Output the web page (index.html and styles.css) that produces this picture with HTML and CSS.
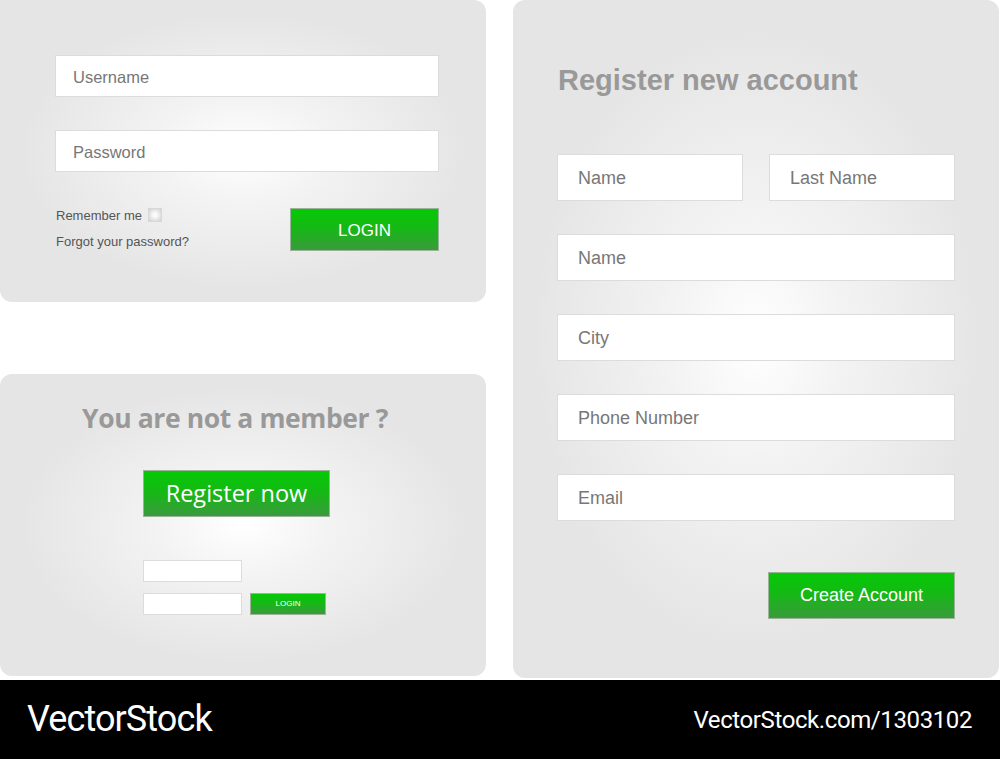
FILE: index.html
```html
<!DOCTYPE html>
<html lang="en">
  <head>
    <meta charset="utf-8" />
    <title>Login and Register</title>
    <link rel="stylesheet" href="styles.css">
  </head>
  <body>
    <div class="main">
      <div class="coluna">
        <div class="painel login">
          <div class="campo">Username</div>
          <div class="campo">Password</div>
          <div class="linha-login">
            <div class="opcoes">
              <p>Remember me <span class="caixa"></span></p>
              <p>Forgot your password?</p>
            </div>
            <div class="botao botao-login">LOGIN</div>
          </div>
        </div>
        <div class="painel membro">
          <h2>You are not a member ?</h2>
          <div class="botao botao-registrar">Register now</div>
          <div class="mini">
            <div class="mini-campo"></div>
            <div class="mini-linha">
              <div class="mini-campo"></div>
              <div class="botao mini-botao">LOGIN</div>
            </div>
          </div>
        </div>
      </div>
      <div class="painel registro">
        <h1>Register new account</h1>
        <div class="duplo">
          <div class="campo grande">Name</div>
          <div class="campo grande">Last Name</div>
        </div>
        <div class="campo grande">Name</div>
        <div class="campo grande">City</div>
        <div class="campo grande">Phone Number</div>
        <div class="campo grande">Email</div>
        <div class="acoes">
          <div class="botao botao-criar">Create Account</div>
        </div>
      </div>
    </div>
    <footer>
      <span class="marca">VectorStock</span>
      <span class="endereco">VectorStock.com/1303102</span>
    </footer>
  </body>
</html>
```

FILE: styles.css
```css
body{
  margin: 0;
  background: #fff;
  font-family: "Liberation Sans", Arial, sans-serif;
}
.main{
  display: flex;
  gap: 27px;
  height: 680px;
}
.coluna{
  width: 486px;
  display: flex;
  flex-direction: column;
  gap: 72px;
}
.painel{
  background: radial-gradient(ellipse at center, #ffffff 0%, #f3f3f3 25%, #e5e5e5 65%);
  border-radius: 12px;
  box-sizing: border-box;
}
.login{
  height: 302px;
  border-radius: 0 12px 12px 12px;
  padding: 55px 47px 0 55px;
}
.campo{
  background: #fff;
  border: 1px solid #dcdcdc;
  height: 42px;
  box-sizing: border-box;
  padding-left: 17px;
  line-height: 42px;
  font-size: 16.5px;
  color: #777;
  margin-bottom: 33px;
}
.linha-login{
  display: flex;
  justify-content: space-between;
  margin-top: 36px;
}
.opcoes p{
  margin: 0 0 12px 1px;
  font-size: 13px;
  color: #555;
  display: flex;
  align-items: center;
  gap: 6px;
  height: 14px;
}
.caixa{
  display: inline-block;
  width: 14px;
  height: 14px;
  background: radial-gradient(circle, #fafafa 20%, #cfcfcf 100%);
  border: 1px solid #d8d8d8;
  box-sizing: border-box;
}
.botao{
  background: linear-gradient(#05c905, #14b914 45%, #3a9b3c);
  border: 1px solid #9bb39b;
  box-sizing: border-box;
  color: #fff;
  text-align: center;
}
.botao-login{
  width: 149px;
  height: 43px;
  line-height: 43px;
  font-size: 17px;
}
.membro{
  height: 302px;
  padding-top: 26px;
  display: flex;
  flex-direction: column;
  align-items: center;
}
h2{
  margin: 0 0 34px;
  font-family: "Open Sans", sans-serif;
  font-size: 26.5px;
  font-weight: 700;
  color: #999;
  letter-spacing: -0.4px;
  margin-left: -16px;
}
.botao-registrar{
  width: 187px;
  height: 47px;
  line-height: 44px;
  font-family: "Open Sans", sans-serif;
  font-size: 23.5px;
  margin-left: -13px;
}
.mini{
  align-self: flex-start;
  margin-left: 143px;
  margin-top: 43px;
}
.mini-linha{
  display: flex;
  gap: 8px;
  margin-top: 11px;
}
.mini-campo{
  width: 99px;
  height: 22px;
  background: #fff;
  border: 1px solid #dcdcdc;
  box-sizing: border-box;
}
.mini-botao{
  width: 76px;
  height: 22px;
  line-height: 20px;
  font-size: 8px;
}
.registro{
  width: 486px;
  height: 678px;
  padding: 60px 44px 0 44px;
}
h1{
  margin: 0 0 54px 1px;
  font-size: 29px;
  font-weight: 700;
  color: #999;
  height: 40px;
  line-height: 40px;
}
.grande{
  height: 47px;
  line-height: 47px;
  font-size: 18px;
  padding-left: 20px;
  margin-bottom: 33px;
}
.duplo{
  display: flex;
  gap: 26px;
}
.duplo .grande{
  flex: 1;
}
.acoes{
  display: flex;
  justify-content: flex-end;
  margin-top: 51px;
}
.botao-criar{
  width: 187px;
  height: 47px;
  line-height: 45px;
  font-size: 18px;
}
footer{
  background: #000;
  height: 79px;
  display: flex;
  align-items: center;
  justify-content: space-between;
  padding: 0 28px 0 27px;
  color: #fff;
  font-family: "Roboto", sans-serif;
}
.marca{
  font-size: 36px;
  letter-spacing: -0.9px;
  margin-top: -2px;
}
.endereco{
  font-size: 24px;
  letter-spacing: -0.4px;
}
```
